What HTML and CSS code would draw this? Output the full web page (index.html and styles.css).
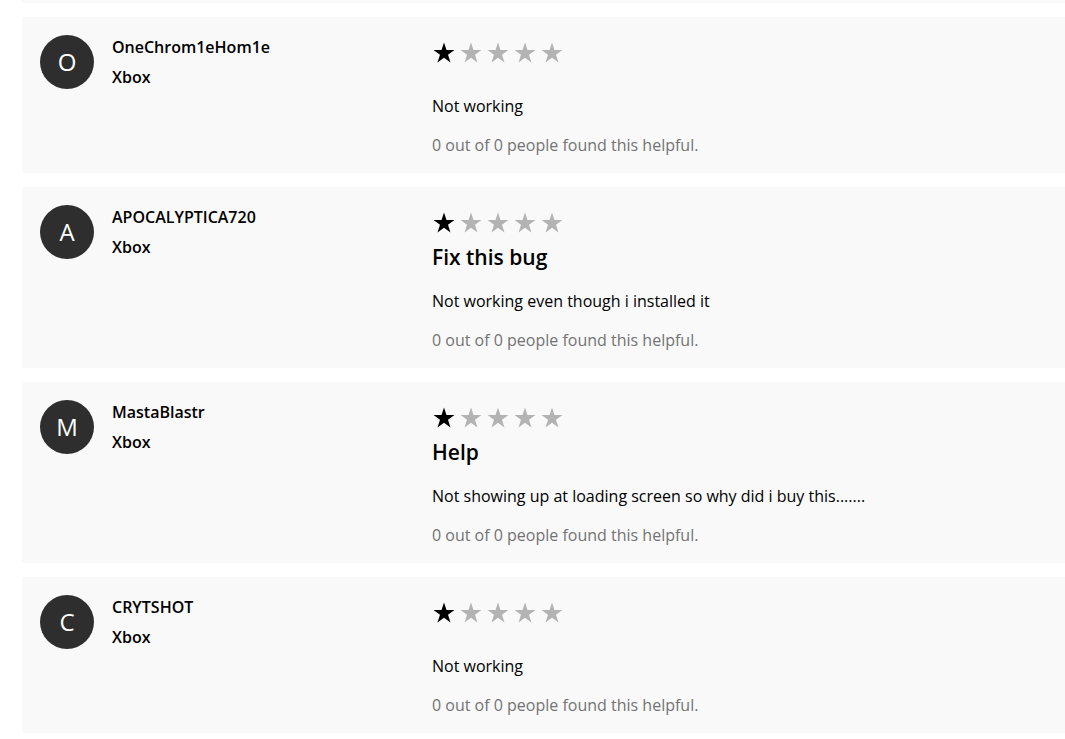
FILE: index.html
```html
<!DOCTYPE html>
<html lang="en">
<head>
<meta charset="utf-8">
<title>Reviews</title>
<link rel="stylesheet" href="styles.css">
</head>
<body>
<div class="reviews">
  <div class="card-stub"></div>

  <div class="card">
    <div class="author">
      <div class="avatar">O</div>
      <div class="who">
        <div class="name">OneChrom1eHom1e</div>
        <div class="platform">Xbox</div>
      </div>
    </div>
    <div class="review">
      <div class="stars">
        <svg class="star on" viewBox="0 0 24 24"><polygon points="12,1.5 14.47,9.1 22.46,9.1 16,13.8 18.47,21.4 12,16.7 5.53,21.4 8,13.8 1.54,9.1 9.53,9.1"/></svg>
        <svg class="star" viewBox="0 0 24 24"><polygon points="12,1.5 14.47,9.1 22.46,9.1 16,13.8 18.47,21.4 12,16.7 5.53,21.4 8,13.8 1.54,9.1 9.53,9.1"/></svg>
        <svg class="star" viewBox="0 0 24 24"><polygon points="12,1.5 14.47,9.1 22.46,9.1 16,13.8 18.47,21.4 12,16.7 5.53,21.4 8,13.8 1.54,9.1 9.53,9.1"/></svg>
        <svg class="star" viewBox="0 0 24 24"><polygon points="12,1.5 14.47,9.1 22.46,9.1 16,13.8 18.47,21.4 12,16.7 5.53,21.4 8,13.8 1.54,9.1 9.53,9.1"/></svg>
        <svg class="star" viewBox="0 0 24 24"><polygon points="12,1.5 14.47,9.1 22.46,9.1 16,13.8 18.47,21.4 12,16.7 5.53,21.4 8,13.8 1.54,9.1 9.53,9.1"/></svg>
      </div>
      <p class="body no-title">Not working</p>
      <p class="helpful">0 out of 0 people found this helpful.</p>
    </div>
  </div>

  <div class="card">
    <div class="author">
      <div class="avatar">A</div>
      <div class="who">
        <div class="name">APOCALYPTICA720</div>
        <div class="platform">Xbox</div>
      </div>
    </div>
    <div class="review">
      <div class="stars">
        <svg class="star on" viewBox="0 0 24 24"><polygon points="12,1.5 14.47,9.1 22.46,9.1 16,13.8 18.47,21.4 12,16.7 5.53,21.4 8,13.8 1.54,9.1 9.53,9.1"/></svg>
        <svg class="star" viewBox="0 0 24 24"><polygon points="12,1.5 14.47,9.1 22.46,9.1 16,13.8 18.47,21.4 12,16.7 5.53,21.4 8,13.8 1.54,9.1 9.53,9.1"/></svg>
        <svg class="star" viewBox="0 0 24 24"><polygon points="12,1.5 14.47,9.1 22.46,9.1 16,13.8 18.47,21.4 12,16.7 5.53,21.4 8,13.8 1.54,9.1 9.53,9.1"/></svg>
        <svg class="star" viewBox="0 0 24 24"><polygon points="12,1.5 14.47,9.1 22.46,9.1 16,13.8 18.47,21.4 12,16.7 5.53,21.4 8,13.8 1.54,9.1 9.53,9.1"/></svg>
        <svg class="star" viewBox="0 0 24 24"><polygon points="12,1.5 14.47,9.1 22.46,9.1 16,13.8 18.47,21.4 12,16.7 5.53,21.4 8,13.8 1.54,9.1 9.53,9.1"/></svg>
      </div>
      <h3 class="title">Fix this bug</h3>
      <p class="body">Not working even though i installed it</p>
      <p class="helpful">0 out of 0 people found this helpful.</p>
    </div>
  </div>

  <div class="card">
    <div class="author">
      <div class="avatar">M</div>
      <div class="who">
        <div class="name">MastaBlastr</div>
        <div class="platform">Xbox</div>
      </div>
    </div>
    <div class="review">
      <div class="stars">
        <svg class="star on" viewBox="0 0 24 24"><polygon points="12,1.5 14.47,9.1 22.46,9.1 16,13.8 18.47,21.4 12,16.7 5.53,21.4 8,13.8 1.54,9.1 9.53,9.1"/></svg>
        <svg class="star" viewBox="0 0 24 24"><polygon points="12,1.5 14.47,9.1 22.46,9.1 16,13.8 18.47,21.4 12,16.7 5.53,21.4 8,13.8 1.54,9.1 9.53,9.1"/></svg>
        <svg class="star" viewBox="0 0 24 24"><polygon points="12,1.5 14.47,9.1 22.46,9.1 16,13.8 18.47,21.4 12,16.7 5.53,21.4 8,13.8 1.54,9.1 9.53,9.1"/></svg>
        <svg class="star" viewBox="0 0 24 24"><polygon points="12,1.5 14.47,9.1 22.46,9.1 16,13.8 18.47,21.4 12,16.7 5.53,21.4 8,13.8 1.54,9.1 9.53,9.1"/></svg>
        <svg class="star" viewBox="0 0 24 24"><polygon points="12,1.5 14.47,9.1 22.46,9.1 16,13.8 18.47,21.4 12,16.7 5.53,21.4 8,13.8 1.54,9.1 9.53,9.1"/></svg>
      </div>
      <h3 class="title">Help</h3>
      <p class="body">Not showing up at loading screen so why did i buy this.......</p>
      <p class="helpful">0 out of 0 people found this helpful.</p>
    </div>
  </div>

  <div class="card">
    <div class="author">
      <div class="avatar">C</div>
      <div class="who">
        <div class="name">CRYTSHOT</div>
        <div class="platform">Xbox</div>
      </div>
    </div>
    <div class="review">
      <div class="stars">
        <svg class="star on" viewBox="0 0 24 24"><polygon points="12,1.5 14.47,9.1 22.46,9.1 16,13.8 18.47,21.4 12,16.7 5.53,21.4 8,13.8 1.54,9.1 9.53,9.1"/></svg>
        <svg class="star" viewBox="0 0 24 24"><polygon points="12,1.5 14.47,9.1 22.46,9.1 16,13.8 18.47,21.4 12,16.7 5.53,21.4 8,13.8 1.54,9.1 9.53,9.1"/></svg>
        <svg class="star" viewBox="0 0 24 24"><polygon points="12,1.5 14.47,9.1 22.46,9.1 16,13.8 18.47,21.4 12,16.7 5.53,21.4 8,13.8 1.54,9.1 9.53,9.1"/></svg>
        <svg class="star" viewBox="0 0 24 24"><polygon points="12,1.5 14.47,9.1 22.46,9.1 16,13.8 18.47,21.4 12,16.7 5.53,21.4 8,13.8 1.54,9.1 9.53,9.1"/></svg>
        <svg class="star" viewBox="0 0 24 24"><polygon points="12,1.5 14.47,9.1 22.46,9.1 16,13.8 18.47,21.4 12,16.7 5.53,21.4 8,13.8 1.54,9.1 9.53,9.1"/></svg>
      </div>
      <p class="body no-title">Not working</p>
      <p class="helpful">0 out of 0 people found this helpful.</p>
    </div>
  </div>
</div>
</body>
</html>
```

FILE: styles.css
```css
html, body {
  margin: 0;
  padding: 0;
  background: #ffffff;
}

body {
  font-family: "Open Sans", "Noto Sans", "Liberation Sans", sans-serif;
  color: #000000;
}

.reviews {
  padding-left: 22px;
  display: flex;
  flex-direction: column;
  gap: 14px;
}

.card-stub {
  height: 3px;
  background: #f9f9f9;
}

.card {
  background: #f9f9f9;
  padding: 18px;
  display: grid;
  grid-template-columns: 392px 1fr;
}

.author {
  display: flex;
  gap: 18px;
  align-items: flex-start;
}

.avatar {
  width: 54px;
  height: 54px;
  border-radius: 50%;
  background: #2e2e2e;
  color: #ffffff;
  font-size: 24px;
  line-height: 54px;
  text-align: center;
}

.who {
  padding-top: 2px;
}

.name {
  font-size: 16px;
  font-weight: 600;
  line-height: 20px;
}

.platform {
  font-size: 16px;
  font-weight: 600;
  line-height: 20px;
  margin-top: 10px;
}

.review {
  display: flex;
  flex-direction: column;
}

.stars {
  display: flex;
  gap: 3px;
  height: 36px;
  align-items: center;
}

.star {
  width: 24px;
  height: 24px;
  fill: #b3b3b3;
}

.star.on {
  fill: #000000;
}

.title {
  margin: 0;
  font-size: 21px;
  font-weight: 600;
  line-height: 32px;
}

.body {
  margin: 18px 0 0;
  font-size: 16px;
  line-height: 20px;
}

.body.no-title {
  margin-top: 25px;
}

.helpful {
  margin: 19px 0 0;
  font-size: 16px;
  line-height: 20px;
  color: #737373;
}
```
